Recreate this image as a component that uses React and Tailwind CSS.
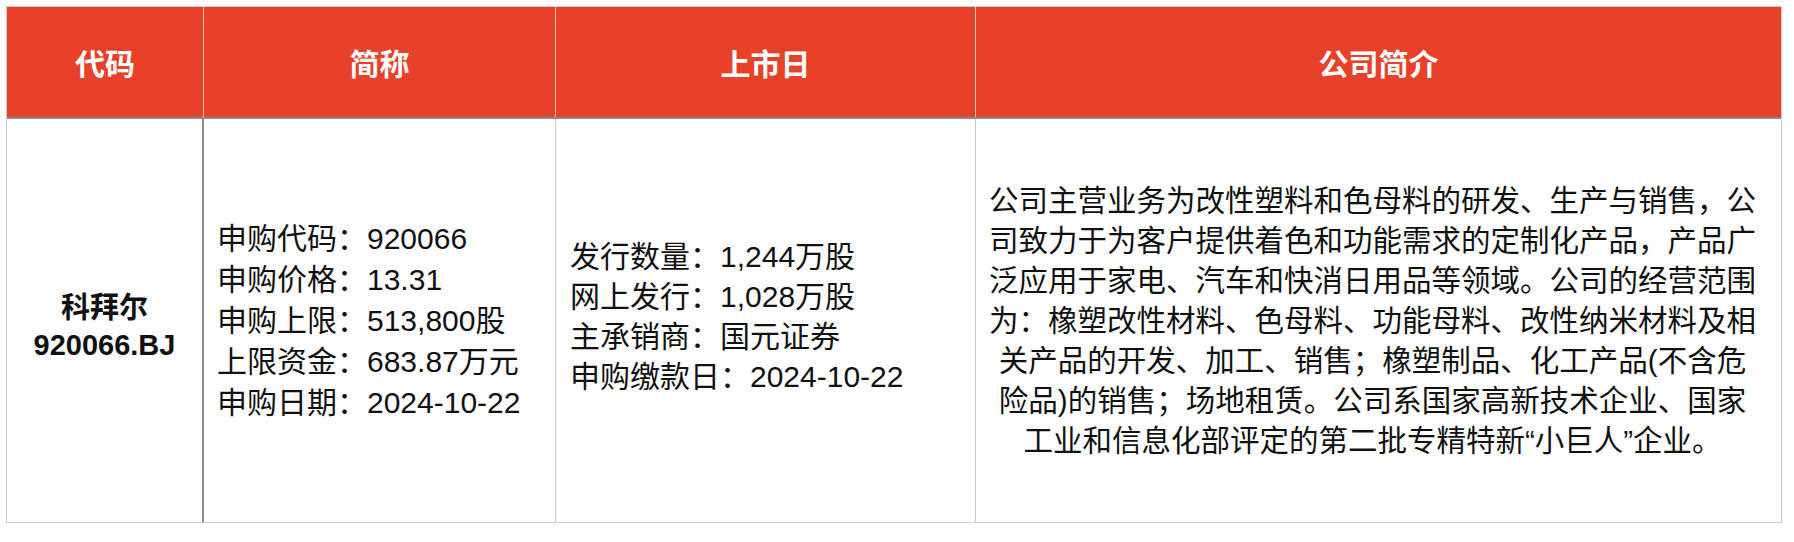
import React from 'react';

const subscribe = [
  ['申购代码：', '920066'],
  ['申购价格：', '13.31'],
  ['申购上限：', '513,800股'],
  ['上限资金：', '683.87万元'],
  ['申购日期：', '2024-10-22'],
];

const issue = [
  ['发行数量：', '1,244万股'],
  ['网上发行：', '1,028万股'],
  ['主承销商：', '国元证券'],
  ['申购缴款日：', '2024-10-22'],
];

const intro = [
  '公司主营业务为改性塑料和色母料的研发、生产与销售，公',
  '司致力于为客户提供着色和功能需求的定制化产品，产品广',
  '泛应用于家电、汽车和快消日用品等领域。公司的经营范围',
  '为：橡塑改性材料、色母料、功能母料、改性纳米材料及相',
  '关产品的开发、加工、销售；橡塑制品、化工产品(不含危',
  '险品)的销售；场地租赁。公司系国家高新技术企业、国家',
  '工业和信息化部评定的第二批专精特新“小巨人”企业。',
];

const App = () => {
  return (
    <div className="bg-white pl-[6px] pt-[6px] pb-[19px] font-['Liberation_Sans','Noto_Sans_CJK_SC',sans-serif] text-[#111]">
      <div className="w-[1776px] border border-[#cdcdcd]">

        {/* header row */}
        <div className="grid grid-cols-[197px_352px_420px_805px] h-[112px] bg-[#e8412a] border-b-2 border-[#8c8c8c] text-white text-[30px] font-bold">
          <div className="flex items-center justify-center pt-[4px] border-r border-[#f6c3b6]">代码</div>
          <div className="flex items-center justify-center pt-[4px] border-r border-[#f6c3b6]">简称</div>
          <div className="flex items-center justify-center pt-[4px] border-r border-[#f6c3b6]">上市日</div>
          <div className="flex items-center justify-center pt-[4px]">公司简介</div>
        </div>

        {/* body row */}
        <div className="grid grid-cols-[197px_352px_420px_805px] h-[403px]">
          <div className="flex flex-col items-center justify-center border-r-2 border-[#8c8c8c] text-[29px] font-semibold leading-[37px] pt-[12px]">
            <span>科拜尔</span>
            <span>920066.BJ</span>
          </div>

          <div className="flex flex-col justify-center pl-[13px] border-r border-[#c9c9c9] text-[30px] leading-[41px]">
            {subscribe.map(([label, value]) => (
              <div key={label} className="whitespace-nowrap">{label}{value}</div>
            ))}
          </div>

          <div className="flex flex-col justify-center pl-[14px] border-r border-[#c9c9c9] text-[30px] leading-[40px] pb-[8px]">
            {issue.map(([label, value]) => (
              <div key={label} className="whitespace-nowrap">{label}{value}</div>
            ))}
          </div>

          <div className="flex flex-col justify-center items-center pr-[12px] text-[29.5px] leading-[40px]">
            {intro.map((line) => (
              <div key={line} className="whitespace-nowrap">{line}</div>
            ))}
          </div>
        </div>

      </div>
    </div>
  );
};

export default App;
